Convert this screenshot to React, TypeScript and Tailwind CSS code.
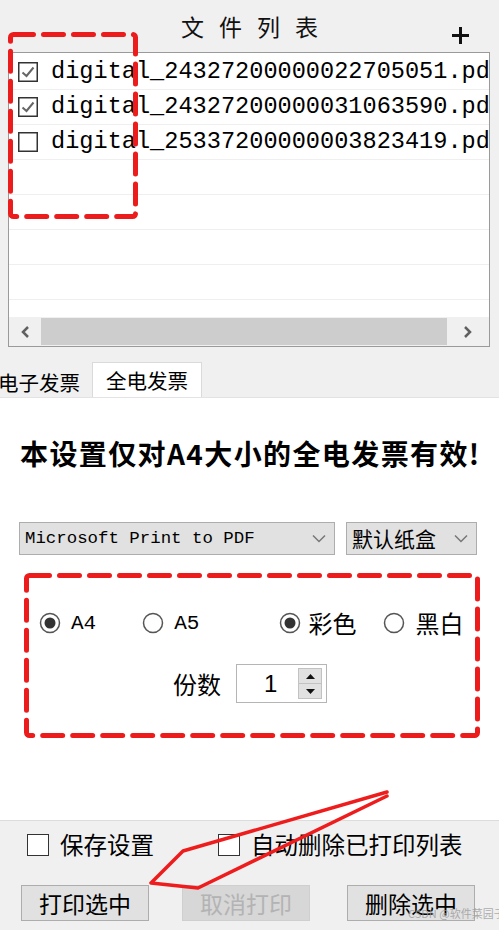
import { ReactNode } from "react";

const cjk = "font-['Microsoft_YaHei','Noto_Sans_CJK_SC',sans-serif]";
const mono = "font-['Liberation_Mono','Noto_Sans_CJK_SC',monospace]";

const files = [
  { name: "digital_24327200000022705051.pdf", checked: true },
  { name: "digital_24327200000031063590.pdf", checked: true },
  { name: "digital_25337200000003823419.pdf", checked: false },
];

function ListCheck({ checked }: { checked: boolean }) {
  return (
    <svg width="20" height="20" viewBox="0 0 20 20" className="shrink-0">
      <rect x="0.75" y="0.75" width="18.5" height="18.5" fill="#fff" stroke="#333" strokeWidth="1.5" />
      {checked && <path d="M4.5 10.5 L8.5 14 L15.5 5.5" fill="none" stroke="#666" strokeWidth="2" />}
    </svg>
  );
}

function Radio({ checked }: { checked: boolean }) {
  return (
    <svg width="22" height="22" viewBox="0 0 22 22" className="shrink-0 block">
      <circle cx="11" cy="11" r="9.5" fill="#fff" stroke="#555" strokeWidth="1.5" />
      {checked && <circle cx="11" cy="11" r="5.5" fill="#333" />}
    </svg>
  );
}

function BoxCheck() {
  return <span className="block w-[22px] h-[22px] border-[1.5px] border-[#333] bg-white shrink-0" />;
}

function Button({ children, disabled }: { children: ReactNode; disabled?: boolean }) {
  return (
    <button
      className={
        disabled
          ? "h-[36px] w-[128px] border border-[#cfcfcf] bg-[#d7d7d7] text-[#b3b3b3] text-[23px] leading-none"
          : "h-[36px] w-[128px] border border-[#adadad] bg-[#e1e1e1] text-black text-[23px] leading-none"
      }
    >
      {children}
    </button>
  );
}

function Dashed({ w, h }: { w: number; h: number }) {
  return (
    <svg width={w} height={h} className="absolute left-0 top-0 pointer-events-none">
      <rect
        x="2.5"
        y="2.5"
        width={w - 5}
        height={h - 5}
        rx="3"
        fill="none"
        stroke="#ec1c1c"
        strokeWidth="5"
        strokeDasharray="20 10"
        strokeLinecap="round"
      />
    </svg>
  );
}

export default function App() {
  return (
    <div className={`relative w-[499px] h-[930px] overflow-hidden bg-white flex flex-col ${cjk}`}>
      {/* file list panel */}
      <div className="bg-[#f0f0f0] h-[397px] flex flex-col shrink-0">
        <div className="relative h-[52px] flex items-center justify-center">
          <span className="text-[23px] tracking-[15px] pl-[15px] text-[#111] leading-none">文件列表</span>
          <svg width="17" height="17" viewBox="0 0 17 17" className="absolute left-[452px] top-[27px]">
            <rect x="7" y="0" width="3" height="17" fill="#111" />
            <rect x="0" y="7" width="17" height="3" fill="#111" />
          </svg>
        </div>

        <div className="mx-[8px] w-[482px] h-[295px] border border-[#9a9a9a] bg-white flex flex-col">
          <div className="flex-1 overflow-hidden pt-[2px]">
            {Array.from({ length: 8 }).map((_, i) => {
              const f = files[i];
              return (
                <div key={i} className="h-[35px] border-b border-[#efefef] flex items-center pl-[9px] gap-[13px] whitespace-nowrap">
                  {f && (
                    <>
                      <ListCheck checked={f.checked} />
                      <span className={`${mono} text-[23.6px] text-black leading-none`}>{f.name}</span>
                    </>
                  )}
                </div>
              );
            })}
          </div>
          <div className="h-[29px] bg-[#f0f0f0] flex items-center shrink-0">
            <div className="w-[32px] flex justify-center">
              <svg width="10" height="12" viewBox="0 0 10 12"><path d="M8 1 L3 6 L8 11" fill="none" stroke="#606060" strokeWidth="2.5" /></svg>
            </div>
            <div className="flex-1 h-[27px] bg-[#cdcdcd]" />
            <div className="w-[42px] flex justify-center">
              <svg width="10" height="12" viewBox="0 0 10 12"><path d="M2 1 L7 6 L2 11" fill="none" stroke="#606060" strokeWidth="2.5" /></svg>
            </div>
          </div>
        </div>

        {/* tabs */}
        <div className="mt-auto flex items-end h-[35px]">
          <div className="w-[92px] h-[29px] flex items-center justify-end pr-[12px] overflow-hidden text-[20.5px] text-black leading-none whitespace-nowrap">
            电子发票
          </div>
          <div className="w-[110px] h-[35px] bg-white border-x border-t border-[#dadada] flex items-center justify-center text-[20.5px] text-black leading-none">
            全电发票
          </div>
        </div>
      </div>

      {/* settings content */}
      <div className="flex-1 border-t border-[#e3e3e3] pt-[39px]">
        <div className="pl-[20px] text-[28px] font-bold leading-[32px] tracking-[1.4px] text-black whitespace-nowrap">
          本设置仅对A4大小的全电发票有效!
        </div>

        <div className="mt-[53px] flex gap-[11px] pl-[19px]">
          <div className="w-[316px] h-[33px] bg-[#e1e1e1] border border-[#adadad] flex items-center justify-between pl-[5px] pr-[8px]">
            <span className={`${mono} text-[17.4px] leading-none text-black`}>Microsoft Print to PDF</span>
            <svg width="14" height="9" viewBox="0 0 14 9"><path d="M1 1.5 L7 7.5 L13 1.5" fill="none" stroke="#777" strokeWidth="1.5" /></svg>
          </div>
          <div className="w-[131px] h-[33px] bg-[#e1e1e1] border border-[#adadad] flex items-center justify-between pl-[5px] pr-[8px]">
            <span className="text-[21px] leading-none text-black">默认纸盒</span>
            <svg width="14" height="9" viewBox="0 0 14 9"><path d="M1 1.5 L7 7.5 L13 1.5" fill="none" stroke="#777" strokeWidth="1.5" /></svg>
          </div>
        </div>

        <div className="relative mt-[18px] ml-[24px] w-[456px] h-[165px]">
          <Dashed w={456} h={165} />
          <div className="flex items-center pt-[26px] pl-[15px] h-[48px] box-content">
            <Radio checked />
            <span className={`${mono} ml-[10px] text-[21px] leading-none text-black`}>A4</span>
            <span className="ml-[46px]"><Radio checked={false} /></span>
            <span className={`${mono} ml-[10px] text-[21px] leading-none text-black`}>A5</span>
            <span className="ml-[80px]"><Radio checked /></span>
            <span className="ml-[7px] text-[24px] leading-none text-black">彩色</span>
            <span className="ml-[27px]"><Radio checked={false} /></span>
            <span className="ml-[10px] text-[24px] leading-none text-black">黑白</span>
          </div>
          <div className="flex items-center mt-[17px] pl-[149px]">
            <span className="text-[24px] leading-none text-black">份数</span>
            <div className="ml-[15px] w-[91px] h-[39px] border border-[#b5b5b5] bg-white flex items-center">
              <span className="ml-[27px] text-[24px] leading-none text-black font-['Liberation_Sans',sans-serif]">1</span>
              <div className="ml-auto mr-[4px] w-[24px] h-[31px] flex flex-col border border-[#c2c2c2]">
                <div className="flex-1 bg-[#e1e1e1] border-b border-[#c2c2c2] flex items-center justify-center">
                  <svg width="9" height="5" viewBox="0 0 9 5"><path d="M0 5 L4.5 0 L9 5 Z" fill="#111" /></svg>
                </div>
                <div className="flex-1 bg-[#e1e1e1] flex items-center justify-center">
                  <svg width="9" height="5" viewBox="0 0 9 5"><path d="M0 0 L4.5 5 L9 0 Z" fill="#111" /></svg>
                </div>
              </div>
            </div>
          </div>
        </div>
      </div>

      {/* bottom bar */}
      <div className="h-[110px] shrink-0 bg-[#f0f0f0] border-t border-[#dcdcdc] pt-[12px]">
        <div className="flex items-center h-[24px]">
          <span className="ml-[27px]"><BoxCheck /></span>
          <span className="ml-[11px] text-[23.5px] leading-none text-black">保存设置</span>
          <span className="ml-[64px]"><BoxCheck /></span>
          <span className="ml-[11px] text-[23.5px] leading-none text-black whitespace-nowrap">自动删除已打印列表</span>
        </div>
        <div className="mt-[28px] flex pl-[21px] gap-[37px]">
          <div className="w-[124px]"><Button>打印选中</Button></div>
          <Button disabled>取消打印</Button>
          <Button>删除选中</Button>
        </div>
      </div>

      {/* annotation: dashed box over list checkboxes */}
      <div className="absolute left-[8px] top-[32px] w-[130px] h-[187px] pointer-events-none">
        <Dashed w={130} h={187} />
      </div>

      {/* annotation: red arrow */}
      <svg width="499" height="930" className="absolute left-0 top-0 pointer-events-none">
        <path
          d="M387 792 L183 851 L151 883 L198 888 L387 796"
          fill="none"
          stroke="#ee1c1c"
          strokeWidth="3.5"
          strokeLinejoin="round"
          strokeLinecap="round"
        />
      </svg>

      <span className="absolute left-[408px] top-[908px] text-[11px] text-[#9a9a9a]/80 leading-none whitespace-nowrap">
        CSDN @软件菜园子
      </span>
    </div>
  );
}
